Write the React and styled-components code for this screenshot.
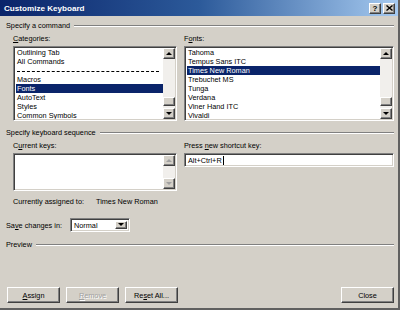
import React from 'react';
import styled, { createGlobalStyle, css } from 'styled-components';

const GlobalStyle = createGlobalStyle`
  html, body {
    margin: 0;
    padding: 0;
    background: #d4d0c8;
  }
  * {
    box-sizing: border-box;
  }
`;

const categories = [
  { name: 'Outlining Tab' },
  { name: 'All Commands' },
  { separator: true },
  { name: 'Macros' },
  { name: 'Fonts', selected: true },
  { name: 'AutoText' },
  { name: 'Styles' },
  { name: 'Common Symbols' },
];

const fonts = [
  { name: 'Tahoma' },
  { name: 'Tempus Sans ITC' },
  { name: 'Times New Roman', selected: true },
  { name: 'Trebuchet MS' },
  { name: 'Tunga' },
  { name: 'Verdana' },
  { name: 'Viner Hand ITC' },
  { name: 'Vivaldi' },
];

function Arrow({ dir, disabled }) {
  const pts = dir === 'up' ? '0,3 3,0 6,3' : '0,0 3,3 6,0';
  return (
    <svg width="6" height="4" viewBox="0 0 6 4">
      <polygon points={pts} fill={disabled ? '#a0a0a0' : '#000'} />
    </svg>
  );
}

function ScrollBar({ disabled, thumb }) {
  return (
    <Scroll>
      <ArrowButton>
        <Arrow dir="up" disabled={disabled} />
      </ArrowButton>
      <Track>{thumb && <Thumb />}</Track>
      <ArrowButton>
        <Arrow dir="down" disabled={disabled} />
      </ArrowButton>
    </Scroll>
  );
}

function ListBox({ items }) {
  return (
    <Sunken $height={75}>
      <Items>
        {items.map((it, i) =>
          it.separator ? (
            <Separator key={i} />
          ) : (
            <Item key={i} $selected={it.selected}>
              {it.name}
            </Item>
          )
        )}
      </Items>
      <ScrollBar thumb />
    </Sunken>
  );
}

function GroupHeader({ children, top }) {
  return (
    <Group $top={top}>
      <span>{children}</span>
      <Rule />
    </Group>
  );
}

export default function App() {
  return (
    <>
      <GlobalStyle />
      <Window>
        <TitleBar>
          <TitleText>Customize Keyboard</TitleText>
          <CaptionButtons>
            <CaptionButton>?</CaptionButton>
            <CaptionButton>
              <svg width="7" height="6" viewBox="0 0 7 6">
                <path d="M0.5 0.5 L6.5 5.5 M6.5 0.5 L0.5 5.5" stroke="#000" strokeWidth="1.4" />
              </svg>
            </CaptionButton>
          </CaptionButtons>
        </TitleBar>
        <Body>
          <GroupHeader>Specify a command</GroupHeader>
          <Columns $top={4}>
            <Field>
              <Label>
                <u>C</u>ategories:
              </Label>
              <ListBox items={categories} />
            </Field>
            <Field>
              <Label>
                F<u>o</u>nts:
              </Label>
              <ListBox items={fonts} />
            </Field>
          </Columns>

          <GroupHeader top={7}>Specify keyboard sequence</GroupHeader>
          <Columns $top={4}>
            <Field>
              <Label>
                C<u>u</u>rrent keys:
              </Label>
              <Sunken $height={38}>
                <Items />
                <ScrollBar disabled />
              </Sunken>
              <Assigned>
                <span>Currently assigned to:</span>
                <span>Times New Roman</span>
              </Assigned>
            </Field>
            <Field>
              <Label>
                Press <u>n</u>ew shortcut key:
              </Label>
              <TextInput>
                Alt+Ctrl+R<Caret />
              </TextInput>
            </Field>
          </Columns>

          <SaveRow>
            <span>
              Sa<u>v</u>e changes in:
            </span>
            <Combo>
              <ComboText>Normal</ComboText>
              <ComboButton>
                <Arrow dir="down" />
              </ComboButton>
            </Combo>
          </SaveRow>

          <GroupHeader>Preview</GroupHeader>
          <Spacer />

          <ButtonRow>
            <ButtonGroup>
              <Button>
                <u>A</u>ssign
              </Button>
              <Button disabled>
                <u>R</u>emove
              </Button>
              <Button>
                Re<u>s</u>et All...
              </Button>
            </ButtonGroup>
            <Button>Close</Button>
          </ButtonRow>
        </Body>
      </Window>
    </>
  );
}

const raised = css`
  background: #d4d0c8;
  border: 1px solid;
  border-color: #ffffff #404040 #404040 #ffffff;
  box-shadow: inset -1px -1px 0 #808080, inset 1px 1px 0 #d4d0c8;
`;

const sunken = css`
  background: #fff;
  border: 1px solid;
  border-color: #808080 #ffffff #ffffff #808080;
  box-shadow: inset 1px 1px 0 #404040, inset -1px -1px 0 #d4d0c8;
`;

const Window = styled.div`
  width: 400px;
  height: 310px;
  background: #d4d0c8;
  border-right: 2px solid #606060;
  border-bottom: 2px solid #606060;
  display: flex;
  flex-direction: column;
  font-family: 'Liberation Sans', Arial, sans-serif;
  font-size: 7.3px;
  line-height: 9px;
  color: #000;
  overflow: hidden;
`;

const TitleBar = styled.div`
  height: 16px;
  flex: none;
  display: flex;
  align-items: center;
  justify-content: space-between;
  padding: 0 3px 0 4px;
  background: linear-gradient(to right, #0a246a 0%, #2c5a9a 50%, #a6caf0 100%);
`;

const TitleText = styled.div`
  color: #fff;
  font-weight: bold;
  font-size: 8.1px;
`;

const CaptionButtons = styled.div`
  display: flex;
  gap: 2px;
`;

const CaptionButton = styled.div`
  ${raised};
  width: 12px;
  height: 11px;
  display: flex;
  align-items: center;
  justify-content: center;
  font-weight: bold;
  font-size: 8px;
`;

const Body = styled.div`
  flex: 1;
  display: flex;
  flex-direction: column;
  padding: 5px 4px 5px 6px;
`;

const Group = styled.div`
  display: flex;
  align-items: center;
  height: 9px;
  margin-top: ${(p) => p.$top || 0}px;
  span {
    white-space: nowrap;
  }
`;

const Rule = styled.div`
  flex: 1;
  margin-left: 4px;
  border-top: 1px solid #808080;
  border-bottom: 1px solid #ffffff;
`;

const Columns = styled.div`
  display: grid;
  grid-template-columns: 164px 210px;
  column-gap: 7px;
  padding-left: 7px;
  margin-top: ${(p) => p.$top}px;
`;

const Field = styled.div`
  display: flex;
  flex-direction: column;
`;

const Label = styled.div`
  height: 9px;
  margin-bottom: 3px;
  white-space: nowrap;
`;

const Sunken = styled.div`
  ${sunken};
  height: ${(p) => p.$height}px;
  display: flex;
  padding: 1px 1px 1px 2px;
`;

const Items = styled.div`
  flex: 1;
  display: flex;
  flex-direction: column;
  overflow: hidden;
`;

const Item = styled.div`
  height: 9px;
  flex: none;
  line-height: 9px;
  padding-left: 1px;
  white-space: nowrap;
  background: ${(p) => (p.$selected ? '#0a246a' : 'transparent')};
  color: ${(p) => (p.$selected ? '#fff' : '#000')};
`;

const Separator = styled.div`
  height: 9px;
  flex: none;
  margin: 0 4px 0 1px;
  border-bottom: 1px dashed #000;
  transform: translateY(-3px);
`;

const Scroll = styled.div`
  width: 12px;
  display: flex;
  flex-direction: column;
  background: #f1efec;
`;

const ArrowButton = styled.div`
  ${raised};
  height: 11px;
  flex: none;
  display: flex;
  align-items: center;
  justify-content: center;
`;

const Track = styled.div`
  flex: 1;
  display: flex;
  flex-direction: column;
  justify-content: flex-end;
  padding-bottom: 2px;
`;

const Thumb = styled.div`
  ${raised};
  height: 9px;
`;

const Assigned = styled.div`
  display: flex;
  gap: 12px;
  margin-top: 6px;
  white-space: nowrap;
`;

const TextInput = styled.div`
  ${sunken};
  height: 14px;
  display: flex;
  align-items: center;
  padding-left: 3px;
`;

const Caret = styled.span`
  display: inline-block;
  width: 1px;
  height: 9px;
  background: #000;
  margin-left: 1px;
`;

const SaveRow = styled.div`
  display: flex;
  align-items: center;
  gap: 8px;
  margin-top: 12px;
  margin-bottom: 8px;
`;

const Combo = styled.div`
  ${sunken};
  width: 60px;
  height: 14px;
  display: flex;
  padding: 2px;
`;

const ComboText = styled.div`
  flex: 1;
  padding-left: 1px;
  line-height: 9px;
`;

const ComboButton = styled.div`
  ${raised};
  width: 12px;
  display: flex;
  align-items: center;
  justify-content: center;
`;

const Spacer = styled.div`
  flex: 1;
`;

const ButtonRow = styled.div`
  display: flex;
  justify-content: space-between;
  align-items: center;
  padding: 0 0 0 1px;
`;

const ButtonGroup = styled.div`
  display: flex;
  gap: 6px;
`;

const Button = styled.div`
  width: 53px;
  height: 16px;
  display: flex;
  align-items: center;
  justify-content: center;
  background: #d4d0c8;
  border: 1px solid;
  border-color: #ffffff #404040 #404040 #ffffff;
  box-shadow: inset -1px -1px 0 #808080;
  color: ${(p) => (p.disabled ? '#a0a0a0' : '#000')};
  text-shadow: ${(p) => (p.disabled ? '1px 1px 0 #fff' : 'none')};
`;
